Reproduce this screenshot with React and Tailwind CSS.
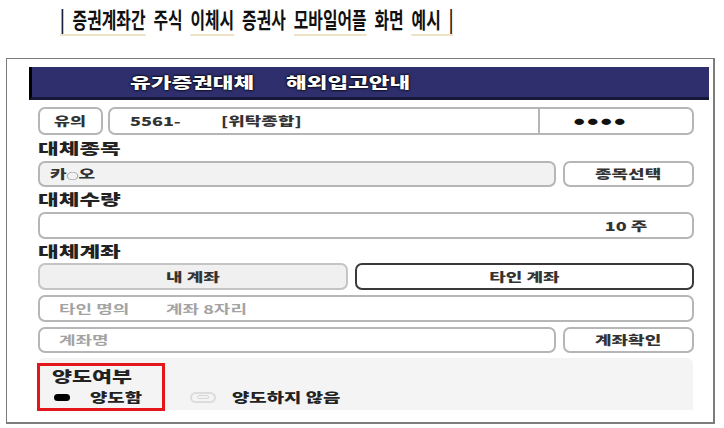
export default function App() {
  const box = "border-2 border-[#b6b6b6] rounded-[7px]";
  return (
    <div className="w-[724px] h-[428px] bg-white overflow-hidden font-['Noto_Sans_CJK_KR','Noto_Sans',sans-serif] text-[#222]">
      {/* title */}
      <div className="h-[58px] pl-[60px] pt-[3px]">
        <span className="inline-block origin-left scale-x-[0.72] text-[22px] leading-[30px] font-bold whitespace-nowrap [word-spacing:6px] text-[#111]">
          <span className="border-b-2 border-[#eee3c9]">| 증권계좌간</span> 주식{" "}
          <span className="border-b-2 border-[#eee3c9]">이체시</span> 증권사{" "}
          <span className="border-b-2 border-[#eee3c9]">모바일어플</span> 화면{" "}
          <span className="border-b-2 border-[#eee3c9]">예시 |</span>
        </span>
      </div>

      {/* phone frame */}
      <div className="ml-[6px] w-[709px] h-[366px] border border-[#7c7c7c] border-r-2 border-b-2 pt-[8px] pl-[22px] pr-[4px]">
        <div className="h-[33px] bg-[#2f2f6d] border-l-[3px] border-l-black border-b-[3px] border-b-[#17173a] flex items-center text-white text-[15px] font-black [text-shadow:0_0_2px_#000,0_0_2px_#000]">
          <span className="inline-block origin-left scale-x-[1.5] ml-[98px]">유가증권대체</span>
          <span className="inline-block origin-left scale-x-[1.5] ml-[73px]">해외입고안내</span>
        </div>

        <div className="ml-[9px] mr-[15px]">
          {/* account row */}
          <div className="flex gap-[5px] mt-[7px] h-[28px] text-[12px] font-black text-[#333]">
            <div className={`${box} w-[65px] flex items-center justify-center`}>
              <span className="inline-block scale-x-[1.45]">유의</span>
            </div>
            <div className={`${box} flex-1 flex items-center`}>
              <div className="flex-1 h-full flex items-center pl-[20px] border-r-2 border-[#b6b6b6]">
                <span className="inline-block origin-left scale-x-[1.5]">5561-</span>
                <span className="inline-block origin-left scale-x-[1.5] ml-[57px]">[위탁종합]</span>
              </div>
              <div className="w-[152px] h-full flex items-center pl-[34px] text-[7px] tracking-[2px] text-[#111]">
                <span className="inline-block origin-left scale-x-[1.5]">●●●●</span>
              </div>
            </div>
          </div>

          <div className="h-[26px] flex items-center text-[15px] font-black">
            <span className="inline-block origin-left scale-x-[1.5]">대체종목</span>
          </div>
          <div className="flex gap-[7px] h-[26px] text-[12px] font-black text-[#333]">
            <div className={`${box} flex-1 bg-[#f2f2f2] flex items-center pl-[10px]`}>
              <span className="inline-block origin-left scale-x-[1.5]">
                카<span className="text-[8px] font-normal">○</span>오
              </span>
            </div>
            <div className={`${box} w-[131px] flex items-center justify-center`}>
              <span className="inline-block scale-x-[1.5]">종목선택</span>
            </div>
          </div>

          <div className="h-[25px] flex items-center text-[15px] font-black">
            <span className="inline-block origin-left scale-x-[1.5]">대체수량</span>
          </div>
          <div className={`${box} h-[27px] flex items-center justify-end pr-[45px] text-[12px] font-black text-[#333]`}>
            <span className="inline-block origin-right scale-x-[1.5]">10 주</span>
          </div>

          <div className="h-[24px] flex items-center text-[15px] font-black">
            <span className="inline-block origin-left scale-x-[1.5]">대체계좌</span>
          </div>
          <div className="flex gap-[7px] h-[27px] text-[12px] font-black text-[#333]">
            <div className="w-[310px] border-2 border-[#c4c4c4] rounded-[7px] bg-[#f0f0f0] flex items-center justify-center">
              <span className="inline-block scale-x-[1.5]">내 계좌</span>
            </div>
            <div className="flex-1 border-2 border-[#3a3a3a] rounded-[7px] flex items-center justify-center">
              <span className="inline-block scale-x-[1.5]">타인 계좌</span>
            </div>
          </div>

          <div className={`${box} mt-[5px] h-[27px] flex items-center pl-[19px] text-[12px] font-bold text-[#a3a3a3]`}>
            <span className="inline-block origin-left scale-x-[1.5]">타인 명의</span>
            <span className="inline-block origin-left scale-x-[1.5] ml-[60px]">계좌 8자리</span>
          </div>

          <div className="flex gap-[7px] mt-[5px] h-[26px] text-[12px] font-bold">
            <div className={`${box} flex-1 flex items-center pl-[19px] text-[#a3a3a3]`}>
              <span className="inline-block origin-left scale-x-[1.5]">계좌명</span>
            </div>
            <div className={`${box} w-[131px] flex items-center justify-center text-[#333] font-black`}>
              <span className="inline-block scale-x-[1.5]">계좌확인</span>
            </div>
          </div>

          {/* transfer option */}
          <div className="relative mt-[5px] mr-[1px] h-[52px] bg-[#f4f4f4] rounded-t-[6px] pl-[14px] pt-[8px]">
            <div className="h-[20px] flex items-center text-[15px] font-black text-[#222]">
              <span className="inline-block origin-left scale-x-[1.45]">양도여부</span>
            </div>
            <div className="flex items-center h-[22px] text-[13px] font-black text-[#222]">
              <span className="ml-[2px] w-[16px] h-[7px] rounded-full bg-black" />
              <span className="inline-block origin-left scale-x-[1.45] ml-[20px]">양도함</span>
              <span className="ml-[64px] w-[26px] h-[11px] rounded-full border-2 border-[#dcdcdc] flex items-center justify-center">
                <span className="w-[12px] h-[4px] rounded-full border border-[#d6d6d6]" />
              </span>
              <span className="inline-block origin-left scale-x-[1.45] ml-[16px]">양도하지 않음</span>
            </div>
            <div className="absolute left-[-1px] top-[5px] w-[128px] h-[48px] border-[3px] border-[#e3161b]" />
          </div>
        </div>
      </div>
    </div>
  );
}
